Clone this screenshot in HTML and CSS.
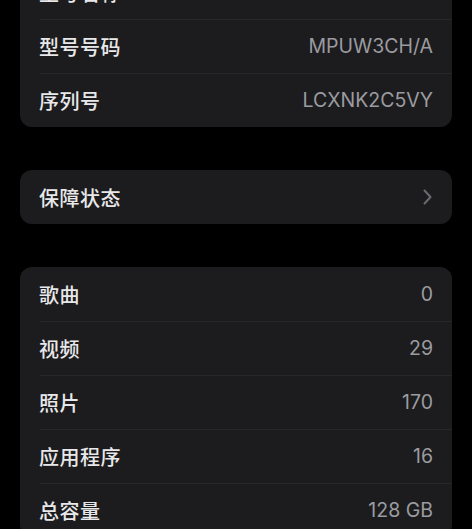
FILE: index.html
```html
<!DOCTYPE html>
<html lang="zh-CN">
<head>
<meta charset="utf-8">
<link rel="stylesheet" href="styles.css">
</head>
<body>
<div class="page">
  <div class="card first">
    <div class="row"><span class="label">型号名称</span><span class="value">iPhone 14</span></div>
    <div class="row"><span class="label">型号号码</span><span class="value">MPUW3CH/A</span></div>
    <div class="row"><span class="label">序列号</span><span class="value">LCXNK2C5VY</span></div>
  </div>
  <div class="card">
    <div class="row"><span class="label">保障状态</span>
      <svg class="chev" width="9" height="16" viewBox="0 0 9 16"><path d="M1.5 1.5 L7.5 8 L1.5 14.5" fill="none" stroke="currentColor" stroke-width="2" stroke-linecap="round" stroke-linejoin="round"/></svg>
    </div>
  </div>
  <div class="card">
    <div class="row"><span class="label">歌曲</span><span class="value">0</span></div>
    <div class="row"><span class="label">视频</span><span class="value">29</span></div>
    <div class="row"><span class="label">照片</span><span class="value">170</span></div>
    <div class="row"><span class="label">应用程序</span><span class="value">16</span></div>
    <div class="row"><span class="label">总容量</span><span class="value">128 GB</span></div>
  </div>
</div>
</body>
</html>
```
FILE: styles.css
```css
html, body {
  margin: 0;
  padding: 0;
  background: #000;
  overflow: hidden;
}
body {
  font-family: Inter, "Noto Sans CJK SC", sans-serif;
  -webkit-font-smoothing: antialiased;
}
.page {
  display: flex;
  flex-direction: column;
  gap: 43px;
  padding: 0 20px;
  margin-top: -35px;
}
.card {
  background: #1c1c1e;
  border-radius: 12px;
  overflow: hidden;
}
.row {
  height: 54px;
  display: flex;
  align-items: center;
  justify-content: space-between;
  padding: 0 19px;
  position: relative;
}
.row + .row::before {
  content: "";
  position: absolute;
  left: 20px;
  right: 0;
  top: 0;
  height: 1px;
  background: #27272a;
}
.label {
  color: #e8e8ea;
  font-family: "Noto Sans CJK SC", sans-serif;
  font-size: 20px;
  font-weight: 500;
  letter-spacing: 0.5px;
}
.value {
  color: #9b9ba0;
  font-size: 19.5px;
  letter-spacing: 0;
}
.chev {
  color: #6a6a6e;
  margin-right: 1px;
}
```
